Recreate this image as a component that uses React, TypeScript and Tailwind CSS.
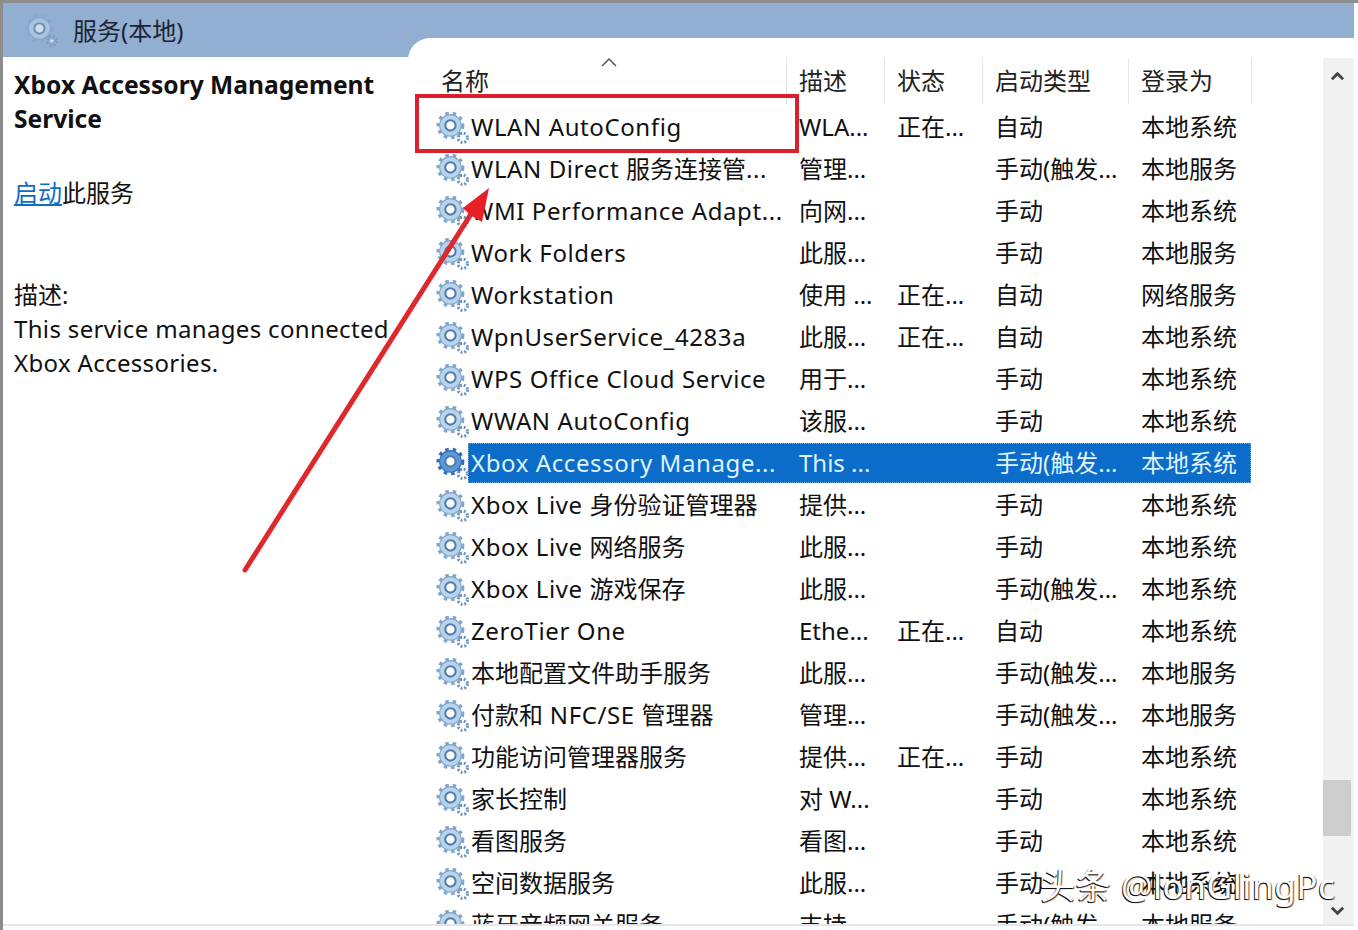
const COLUMNS = ["w-[98px]", "w-[98px]", "w-[146px]", "w-[123px]"];

const ROWS = [
  ["WLAN AutoConfig", "WLA...", "正在...", "自动", "本地系统"],
  ["WLAN Direct 服务连接管...", "管理...", "", "手动(触发...", "本地服务"],
  ["WMI Performance Adapt...", "向网...", "", "手动", "本地系统"],
  ["Work Folders", "此服...", "", "手动", "本地服务"],
  ["Workstation", "使用 ...", "正在...", "自动", "网络服务"],
  ["WpnUserService_4283a", "此服...", "正在...", "自动", "本地系统"],
  ["WPS Office Cloud Service", "用于...", "", "手动", "本地系统"],
  ["WWAN AutoConfig", "该服...", "", "手动", "本地系统"],
  ["Xbox Accessory Manage...", "This ...", "", "手动(触发...", "本地系统"],
  ["Xbox Live 身份验证管理器", "提供...", "", "手动", "本地系统"],
  ["Xbox Live 网络服务", "此服...", "", "手动", "本地系统"],
  ["Xbox Live 游戏保存", "此服...", "", "手动(触发...", "本地系统"],
  ["ZeroTier One", "Ethe...", "正在...", "自动", "本地系统"],
  ["本地配置文件助手服务", "此服...", "", "手动(触发...", "本地服务"],
  ["付款和 NFC/SE 管理器", "管理...", "", "手动(触发...", "本地服务"],
  ["功能访问管理器服务", "提供...", "正在...", "手动", "本地系统"],
  ["家长控制", "对 W...", "", "手动", "本地系统"],
  ["看图服务", "看图...", "", "手动", "本地系统"],
  ["空间数据服务", "此服...", "", "手动", "本地系统"],
  ["蓝牙音频网关服务", "支持...", "", "手动(触发...", "本地服务"],
];

function GearIcon({ selected = false, className = "" }: { selected?: boolean; className?: string }) {
  const edge = selected ? "#2f6fb8" : "#7ea5cc";
  const body = selected ? "#5c97d6" : "#b9d3ea";
  return (
    <svg viewBox="0 0 32 32" className={className}>
      <circle cx="14" cy="14" r="12" fill="none" stroke={edge} strokeWidth="3" strokeDasharray="3.4 3.9" />
      <circle cx="14" cy="14" r="10.5" fill={body} stroke={edge} strokeWidth="1" />
      <circle cx="14" cy="14" r="5" fill="#fff" stroke="#4f7fae" strokeWidth="2" />
      <circle cx="26" cy="26" r="4.5" fill="none" stroke="#6b93bb" strokeWidth="3" strokeDasharray="1.8 1.8" />
      <circle cx="26" cy="26" r="1.6" fill="#fff" />
    </svg>
  );
}

// latin runs are set wider than the cjk ones in the name column
function ServiceName({ text }: { text: string }) {
  return (
    <>
      {text.split(/([\x00-\x7f]+)/).map((part, i) => (
        <span key={i} className={i % 2 === 1 ? "tracking-[0.6px]" : ""}>
          {part}
        </span>
      ))}
    </>
  );
}

function Row({ cells, selected }: { cells: string[]; selected: boolean }) {
  const [name, ...rest] = cells;
  return (
    <div className="flex h-[42px] shrink-0 items-center">
      <div className="w-[60px] shrink-0 pl-[28px]">
        <GearIcon selected={selected} className="h-[33px] w-[33px]" />
      </div>
      <div
        className={`flex h-[40px] items-center ${
          selected ? "bg-[#0b6cc9] text-[#dff3ff] outline-1 -outline-offset-1 outline-dotted outline-[#6ea6de]" : "text-[#111]"
        }`}
      >
        <div className="w-[318px] whitespace-nowrap pl-[3px]">
          <ServiceName text={name} />
        </div>
        {rest.map((cell, i) => (
          <div key={i} className={`${COLUMNS[i]} whitespace-nowrap pl-[13px]`}>
            {cell}
          </div>
        ))}
      </div>
    </div>
  );
}

export default function App() {
  return (
    <div className="relative h-[930px] w-[1358px] overflow-hidden border-l-[3px] border-t-[3px] border-[#8d8d8d] bg-white pb-[4px] pr-[4px] font-['Noto_Sans','Noto_Sans_CJK_SC',sans-serif] text-[24px] leading-[34px] text-[#111]">
      <div className="flex h-[54px] items-start gap-[15px] bg-[#92aed0] pl-[22px] pt-[11px]">
        <GearIcon className="h-[33px] w-[33px] opacity-60" />
        <span className="text-[#1c2430]">服务(本地)</span>
      </div>

      <div className="flex h-[869px] border-b-2 border-[#e3e6ea]">
        <div className="w-[405px] shrink-0 pl-[11px] pt-[11px]">
          <h1 className="w-[385px] text-[24.6px] font-bold">Xbox Accessory Management Service</h1>
          <p className="mt-[40px]">
            <span className="text-[#0f6cc4] underline">启动</span>此服务
          </p>
          <p className="mt-[68px]">描述:</p>
          <p className="w-[385px] tracking-[0.34px]">This service manages connected Xbox Accessories.</p>
        </div>

        <div className="z-10 -mt-[19px] flex min-w-0 flex-1 overflow-hidden rounded-tl-[22px] bg-white">
          <div className="flex min-w-0 flex-1 flex-col overflow-hidden">
            <div className="relative flex h-[68px] shrink-0 items-end pb-[2px]">
              <div className="w-[378px] self-stretch" />
              <svg viewBox="0 0 16 10" className="absolute left-[193px] top-[19px] h-[10px] w-[16px]">
                <path d="M1 9 8 2l7 7" fill="none" stroke="#555" strokeWidth="1.5" />
              </svg>
              <span className="absolute left-[33px] top-[26px] text-[#222]">名称</span>
              {["描述", "状态", "启动类型", "登录为"].map((label, i) => (
                <div key={label} className={`${COLUMNS[i]} h-[46px] border-l border-[#e4e4e4] pl-[12px] pt-[6px] text-[#222]`}>
                  {label}
                </div>
              ))}
              <div className="h-[46px] border-l border-[#e4e4e4]" />
            </div>
            {ROWS.map((cells, i) => (
              <Row key={cells[0]} cells={cells} selected={i === 8} />
            ))}
          </div>

          <div className="mt-[20px] flex w-[31px] shrink-0 flex-col items-start bg-[#f1f1f1]">
            <svg viewBox="0 0 16 10" className="ml-[7px] mt-[13px] h-[10px] w-[15px]">
              <path d="M2 8.5 8 2.5l6 6" fill="none" stroke="#444" strokeWidth="3" />
            </svg>
            <div className="mt-[699px] h-[56px] w-[28px] bg-[#cdcdcd]" />
            <svg viewBox="0 0 16 10" className="ml-[7px] mt-[70px] h-[10px] w-[15px]">
              <path d="M2 1.5 8 7.5l6-6" fill="none" stroke="#444" strokeWidth="3" />
            </svg>
          </div>
        </div>
      </div>

      {/* annotation drawn on top of the screenshot */}
      <div className="absolute left-[412px] top-[91px] z-20 h-[59px] w-[384px] border-4 border-[#dc1f2a]" />
      <svg viewBox="0 0 1358 930" className="pointer-events-none absolute -left-[3px] -top-[3px] z-20 h-[930px] w-[1358px]">
        <path d="M245 570 471 214" stroke="#e0272c" strokeWidth="5" strokeLinecap="round" fill="none" />
        <path d="M489 188 463 208 470 215 482 222Z" fill="#e81f26" />
      </svg>
      <div className="absolute left-[1037px] top-[861px] z-20 whitespace-nowrap text-[35px] font-normal leading-[44px] tracking-[0.6px] text-white [text-shadow:-1px_1px_0_#111,1px_1px_1px_#444]">
        头条 @lonGlingPc
      </div>
    </div>
  );
}
